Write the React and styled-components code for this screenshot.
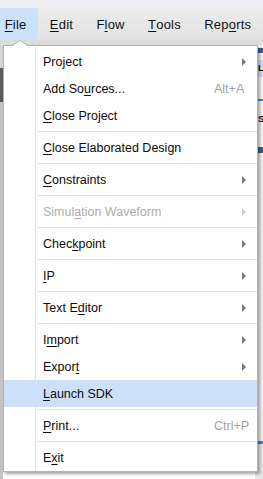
import React from "react";
import styled, { createGlobalStyle } from "styled-components";

const GlobalStyle = createGlobalStyle`
  html, body { margin: 0; padding: 0; background: #f0f0f0; overflow: hidden; }
  body { font-family: "Liberation Sans", Arial, sans-serif; }
`;

const Window = styled.div`
  position: relative;
  width: 263px;
  height: 479px;
  overflow: hidden;
  display: flex;
  flex-direction: column;
  background: #f0f0f0;
`;

const TitleStrip = styled.div`
  height: 8px;
  background: #eeeef3;
`;

const MenuBar = styled.div`
  height: 32px;
  display: flex;
  align-items: stretch;
  margin-left: -7px;
  background: linear-gradient(#ececec, #e2e2e2);
`;

const BarItem = styled.div`
  display: flex;
  align-items: center;
  padding: 0 11.7px;
  font-size: 13px;
  letter-spacing: 0.2px;
  color: #111;
  background: ${(p) => (p.$active ? "#cce1fa" : "transparent")};
  u { text-decoration: underline; text-underline-offset: 2px; }
`;

const Body = styled.div`
  flex: 1;
  display: flex;
  flex-direction: column;
`;

const ToolStrip = styled.div`
  height: 5px;
  background: #dcdcdc;
`;

const Work = styled.div`
  flex: 1;
  display: flex;
`;

const LeftRail = styled.div`
  width: 3px;
  display: flex;
  flex-direction: column;
`;

const RailPart = styled.div`
  height: ${(p) => p.$h}px;
  flex: ${(p) => (p.$grow ? 1 : "none")};
  background: ${(p) => p.$c};
`;

const Center = styled.div`
  flex: 1;
  background: #ffffff;
`;

const RightPane = styled.div`
  width: 8px;
  display: flex;
  flex-direction: column;
  background: #f4f4f4;
  font-size: 9px;
  font-weight: bold;
  overflow: hidden;
`;

const PanePiece = styled.div`
  height: ${(p) => p.$h}px;
  flex: ${(p) => (p.$grow ? 1 : "none")};
  background: ${(p) => p.$c || "transparent"};
  color: #111;
  padding-left: 3px;
  line-height: ${(p) => p.$h}px;
  white-space: nowrap;
`;

const Menu = styled.div`
  position: absolute;
  left: 3px;
  top: 45px;
  width: 253px;
  padding-top: 2px;
  background: #ffffff linear-gradient(to right, transparent 31px, #e3e3e3 31px, #e3e3e3 32px, transparent 32px);
  border: 1px solid #b4b4b4;
  box-shadow: 2px 2px 3px rgba(0, 0, 0, 0.35);
  font-size: 12.5px;
`;

const Notch = styled.svg`
  position: absolute;
  top: -6px;
  left: 8px;
  width: 16px;
  height: 6px;
  overflow: visible;
`;

const Item = styled.div`
  height: 27px;
  display: grid;
  grid-template-columns: 39px 1fr 43px;
  align-items: center;
  color: ${(p) => (p.$disabled ? "#acacac" : "#0c0c0c")};
  background: ${(p) => (p.$hover ? "#cce0fa" : "transparent")};
  u { text-decoration: underline; text-underline-offset: 1.5px; }
`;

const Label = styled.span`
  grid-column: 2;
  white-space: nowrap;
`;

const Shortcut = styled.span`
  grid-column: 3;
  color: #a0a0a0;
  white-space: nowrap;
`;

const Arrow = styled.span`
  grid-column: 3;
  justify-self: start;
  margin-left: 28px;
  width: 0;
  height: 0;
  border-top: 4px solid transparent;
  border-bottom: 4px solid transparent;
  border-left: 4px solid ${(p) => (p.$disabled ? "#cfcfcf" : "#7a7a7a")};
`;

const Separator = styled.div`
  height: 5px;
  display: flex;
  align-items: center;
  padding-left: 34px;
  &::after {
    content: "";
    flex: 1;
    height: 1px;
    background: #e0e0e0;
  }
`;

const M = ({ text, at }) => (
  <>
    {text.slice(0, at)}
    <u>{text[at]}</u>
    {text.slice(at + 1)}
  </>
);

const items = [
  { t: "Project", u: 3, sub: true },
  { t: "Add Sources...", u: 6, sc: "Alt+A" },
  { t: "Close Project", u: 0 },
  "sep",
  { t: "Close Elaborated Design", u: 0 },
  "sep",
  { t: "Constraints", u: 0, sub: true },
  "sep",
  { t: "Simulation Waveform", u: 5, sub: true, dis: true },
  "sep",
  { t: "Checkpoint", u: 4, sub: true },
  "sep",
  { t: "IP", u: 0, sub: true },
  "sep",
  { t: "Text Editor", u: 6, sub: true },
  "sep",
  { t: "Import", u: 1, sub: true },
  { t: "Export", u: 5, sub: true },
  { t: "Launch SDK", u: 0, hover: true },
  "sep",
  { t: "Print...", u: 0, sc: "Ctrl+P" },
  "sep",
  { t: "Exit", u: 1 },
];

const bar = [
  { t: "File", u: 0, active: true },
  { t: "Edit", u: 0 },
  { t: "Flow", u: 1 },
  { t: "Tools", u: 0 },
  { t: "Reports", u: 3 },
];

export default function App() {
  return (
    <>
      <GlobalStyle />
      <Window>
        <TitleStrip />
        <MenuBar>
          {bar.map((b) => (
            <BarItem key={b.t} $active={b.active}>
              <M text={b.t} at={b.u} />
            </BarItem>
          ))}
        </MenuBar>
        <Body>
          <ToolStrip />
          <Work>
            <LeftRail>
              <RailPart $h={23} $c="#d6d6d6" />
              <RailPart $h={34} $c="#5c5c5c" />
              <RailPart $grow $c="#c4c4c4" />
            </LeftRail>
            <Center />
            <RightPane>
              <PanePiece $h={3} $c="#f4f4f4" />
              <PanePiece $h={5} $c="#3b5f99" />
              <PanePiece $h={7} $c="#f4f4f4" />
              <PanePiece $h={17} $c="#cfe0f5">L</PanePiece>
              <PanePiece $h={22} $c="#f7f7f7" />
              <PanePiece $h={2} $c="#4a7cc9" />
              <PanePiece $h={10} $c="#f7f7f7" />
              <PanePiece $h={16}>S</PanePiece>
              <PanePiece $h={20} $c="#f7f7f7" />
              <PanePiece $h={6} $c="#3b5f99" />
              <PanePiece $h={288} $c="#f2f2f2" />
              <PanePiece $h={3} $c="#4a7cc9" />
              <PanePiece $grow $c="#e8e8e8" />
            </RightPane>
          </Work>
        </Body>

        <Menu>
          <Notch viewBox="0 0 16 6">
            <polygon points="0,6.5 8,0.5 16,6.5" fill="#ffffff" />
            <polyline points="0,5.5 8,0.5 16,5.5" fill="none" stroke="#b4b4b4" strokeWidth="1" />
          </Notch>
          {items.map((it, i) =>
            it === "sep" ? (
              <Separator key={i} />
            ) : (
              <Item key={i} $disabled={it.dis} $hover={it.hover}>
                <Label>
                  <M text={it.t} at={it.u} />
                </Label>
                {it.sc && <Shortcut>{it.sc}</Shortcut>}
                {it.sub && <Arrow $disabled={it.dis} />}
              </Item>
            )
          )}
        </Menu>
      </Window>
    </>
  );
}
